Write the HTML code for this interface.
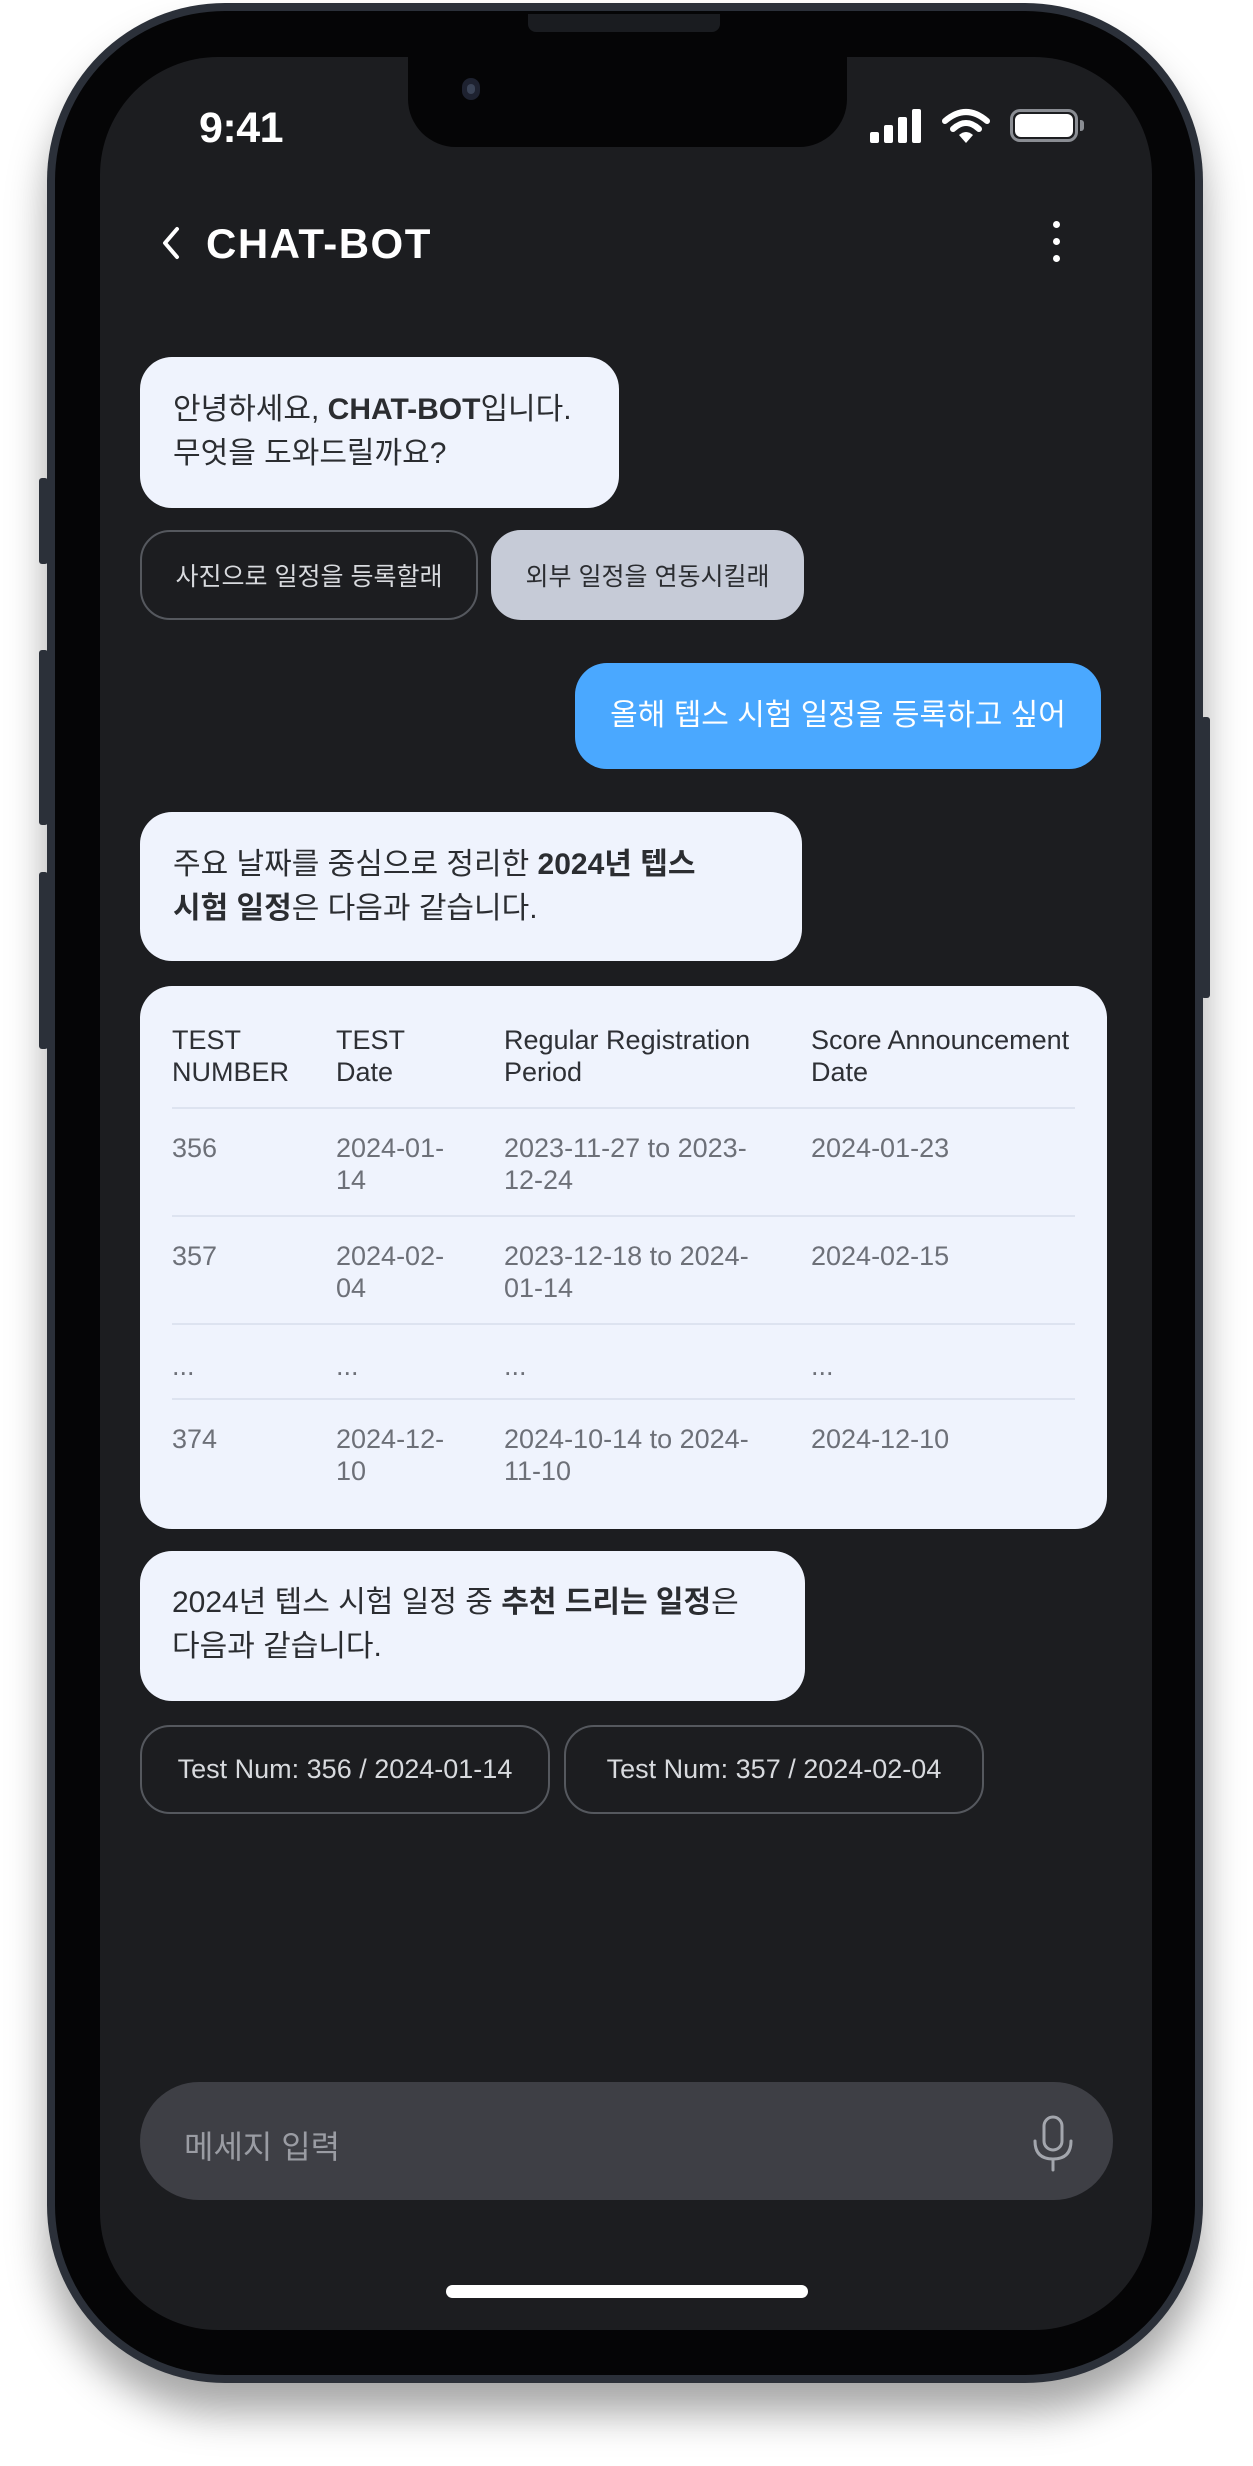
<!DOCTYPE html>
<html><head><meta charset="utf-8">
<style>
*{margin:0;padding:0;box-sizing:border-box}
html,body{width:1253px;height:2466px;background:#fff;overflow:hidden;font-family:"Liberation Sans","Noto Sans CJK KR",sans-serif}
.abs{position:absolute}
.phone{left:47px;top:3px;width:1156px;height:2380px;border-radius:178px;background:#2b3039;box-shadow:0 30px 40px rgba(0,0,0,.35)}
.phone-in{left:55px;top:11px;width:1140px;height:2364px;border-radius:170px;background:#050506}
.screen{left:100px;top:57px;width:1052px;height:2273px;border-radius:118px;background:#1c1d20;overflow:hidden}
.btn{background:#2b3039;border-radius:3px}
.bub{position:absolute;background:#eff3fd;border-radius:32px;color:#2b2d31;font-size:30px;line-height:44px;white-space:nowrap}
.chip{position:absolute;border:2px solid #55585e;border-radius:30px;color:#d8dade;font-size:25px;display:flex;align-items:center;justify-content:center;white-space:nowrap}
.t{position:absolute;font-size:27px;line-height:32px;color:#6d7078;white-space:nowrap}
.th{color:#2e3035}
.hr{position:absolute;left:172px;width:903px;height:2px;background:#dde3f0}
</style></head><body>
<div class="abs phone"></div>
<div class="abs phone-in"></div>
<div class="abs btn" style="left:39px;top:478px;width:9px;height:86px"></div>
<div class="abs btn" style="left:39px;top:650px;width:9px;height:175px"></div>
<div class="abs btn" style="left:39px;top:872px;width:9px;height:177px"></div>
<div class="abs btn" style="left:1201px;top:717px;width:9px;height:281px"></div>
<div class="abs" style="left:528px;top:14px;width:192px;height:18px;background:#1a1c20;border-radius:0 0 8px 8px"></div>
<div class="abs screen"></div>
<!-- notch -->
<div class="abs" style="left:408px;top:50px;width:439px;height:97px;background:#050506;border-radius:0 0 48px 48px"></div>
<div class="abs" style="left:462px;top:78px;width:18px;height:22px;border-radius:9px;background:#1e2230"></div>
<div class="abs" style="left:467px;top:84px;width:8px;height:10px;border-radius:4px;background:#3a4356"></div>
<!-- status -->
<div class="abs" style="left:199px;top:104px;font-size:43px;font-weight:bold;color:#fff;letter-spacing:-0.5px">9:41</div>
<svg class="abs" style="left:870px;top:108px" width="54" height="36" viewBox="0 0 54 36"><rect x="0" y="24" width="9" height="11" rx="2" fill="#fff"/><rect x="14" y="17" width="9" height="18" rx="2" fill="#fff"/><rect x="28" y="9" width="9" height="26" rx="2" fill="#fff"/><rect x="42" y="1" width="9" height="34" rx="2" fill="#fff"/></svg>
<svg class="abs" style="left:942px;top:108px" width="48" height="36" viewBox="0 0 48 36"><path d="M3 13 Q24 -5 45 13" stroke="#fff" stroke-width="6" fill="none" stroke-linecap="round"/><path d="M11 21 Q24 9 37 21" stroke="#fff" stroke-width="6" fill="none" stroke-linecap="round"/><path d="M17 27 L24 35 L31 27 Q24 21 17 27Z" fill="#fff"/></svg>
<div class="abs" style="left:1010px;top:109px;width:68px;height:33px;border:3px solid #8a8d93;border-radius:10px"></div>
<div class="abs" style="left:1015px;top:114px;width:58px;height:23px;background:#fff;border-radius:6px"></div>
<div class="abs" style="left:1080px;top:120px;width:4px;height:11px;background:#8a8d93;border-radius:0 3px 3px 0"></div>
<!-- header -->
<svg class="abs" style="left:160px;top:225px" width="24" height="36" viewBox="0 0 24 36"><path d="M17 4 L5 18 L17 32" stroke="#fff" stroke-width="4" fill="none" stroke-linecap="round" stroke-linejoin="round"/></svg>
<div class="abs" style="left:206px;top:220px;font-size:42px;font-weight:bold;color:#fff;letter-spacing:1.5px">CHAT-BOT</div>
<div class="abs" style="left:1053px;top:221px;width:7px;height:7px;border-radius:50%;background:#fff"></div>
<div class="abs" style="left:1053px;top:238px;width:7px;height:7px;border-radius:50%;background:#fff"></div>
<div class="abs" style="left:1053px;top:255px;width:7px;height:7px;border-radius:50%;background:#fff"></div>
<!-- bubble 1 -->
<div class="bub" style="left:140px;top:357px;width:479px;height:151px;padding:31px 0 0 33px">안녕하세요, <b>CHAT-BOT</b>입니다.<br>무엇을 도와드릴까요?</div>
<div class="chip" style="left:140px;top:530px;width:338px;height:90px">사진으로 일정을 등록할래</div>
<div class="chip" style="left:491px;top:530px;width:313px;height:90px;background:#c6cbd7;border-color:#c6cbd7;color:#2b2d31">외부 일정을 연동시킬래</div>
<!-- user -->
<div class="bub" style="left:575px;top:663px;width:526px;height:106px;background:#4aa8ff;color:#fff;display:flex;align-items:center;justify-content:center;border-radius:32px">올해 텝스 시험 일정을 등록하고 싶어</div>
<!-- bubble 3 -->
<div class="bub" style="left:140px;top:812px;width:662px;height:149px;padding:31px 0 0 33px">주요 날짜를 중심으로 정리한 <b>2024년 텝스<br>시험 일정</b>은 다음과 같습니다.</div>
<!-- table -->
<div class="bub" style="left:140px;top:986px;width:967px;height:543px"></div>
<div class="t th" style="left:172px;top:1024px">TEST<br>NUMBER</div>
<div class="t th" style="left:336px;top:1024px">TEST<br>Date</div>
<div class="t th" style="left:504px;top:1024px">Regular Registration<br>Period</div>
<div class="t th" style="left:811px;top:1024px">Score Announcement<br>Date</div>
<div class="hr" style="top:1107px"></div>
<div class="t" style="left:172px;top:1132px">356</div>
<div class="t" style="left:336px;top:1132px">2024-01-<br>14</div>
<div class="t" style="left:504px;top:1132px">2023-11-27 to 2023-<br>12-24</div>
<div class="t" style="left:811px;top:1132px">2024-01-23</div>
<div class="hr" style="top:1215px"></div>
<div class="t" style="left:172px;top:1240px">357</div>
<div class="t" style="left:336px;top:1240px">2024-02-<br>04</div>
<div class="t" style="left:504px;top:1240px">2023-12-18 to 2024-<br>01-14</div>
<div class="t" style="left:811px;top:1240px">2024-02-15</div>
<div class="hr" style="top:1323px"></div>
<div class="t" style="left:172px;top:1350px">...</div>
<div class="t" style="left:336px;top:1350px">...</div>
<div class="t" style="left:504px;top:1350px">...</div>
<div class="t" style="left:811px;top:1350px">...</div>
<div class="hr" style="top:1398px"></div>
<div class="t" style="left:172px;top:1423px">374</div>
<div class="t" style="left:336px;top:1423px">2024-12-<br>10</div>
<div class="t" style="left:504px;top:1423px">2024-10-14 to 2024-<br>11-10</div>
<div class="t" style="left:811px;top:1423px">2024-12-10</div>
<!-- bubble 4 -->
<div class="bub" style="left:140px;top:1551px;width:665px;height:150px;padding:30px 0 0 32px">2024년 텝스 시험 일정 중 <b>추천 드리는 일정</b>은<br>다음과 같습니다.</div>
<div class="chip" style="left:140px;top:1725px;width:410px;height:89px;font-size:27px">Test Num: 356 / 2024-01-14</div>
<div class="chip" style="left:564px;top:1725px;width:420px;height:89px;font-size:27px">Test Num: 357 / 2024-02-04</div>
<!-- input -->
<div class="abs" style="left:140px;top:2082px;width:973px;height:118px;border-radius:59px;background:#3e3f45"></div>
<div class="abs" style="left:184px;top:2122px;font-size:32px;color:#9a9ca3">메세지 입력</div>
<svg class="abs" style="left:1030px;top:2114px" width="48" height="58" viewBox="0 0 48 58"><rect x="14" y="3" width="18" height="33" rx="9" stroke="#a3a6ad" stroke-width="3" fill="none"/><path d="M5 27 Q5 45 23 45 Q41 45 41 27" stroke="#a3a6ad" stroke-width="3" fill="none" stroke-linecap="round"/><path d="M23 45 V56" stroke="#a3a6ad" stroke-width="3" stroke-linecap="round"/></svg>
<div class="abs" style="left:446px;top:2285px;width:362px;height:13px;border-radius:7px;background:#fff"></div>
</body></html>
